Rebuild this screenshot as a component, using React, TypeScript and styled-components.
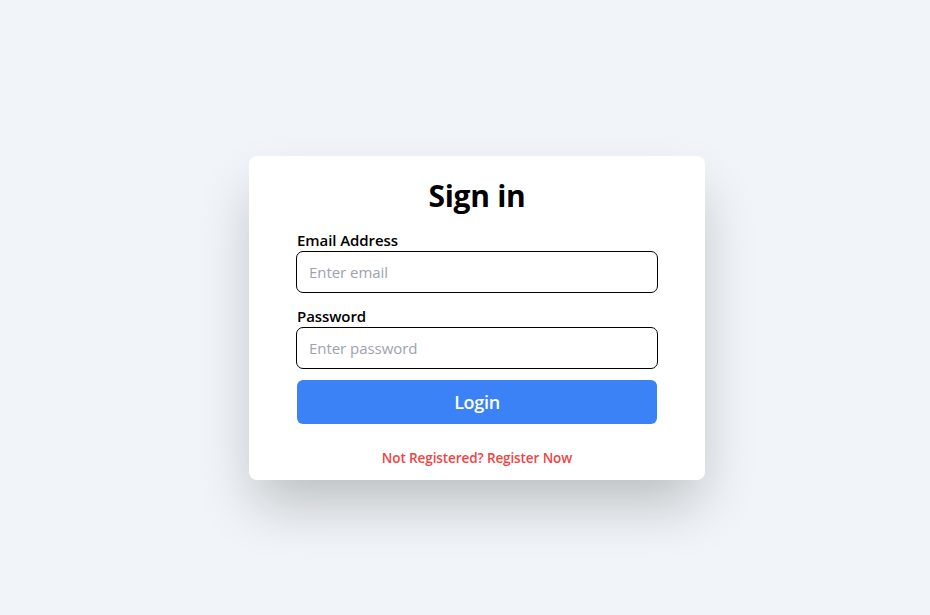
import React from "react";
import styled, { createGlobalStyle } from "styled-components";

const GlobalStyle = createGlobalStyle`
  *, *::before, *::after { box-sizing: border-box; }
  body {
    margin: 0;
    font-family: "Open Sans", "Noto Sans", sans-serif;
    color: #000;
  }
`;

const Page = styled.main`
  display: flex;
  justify-content: center;
  height: 100vh;
  padding: 156px 0 0 24px;
  overflow: hidden;
  background: #f1f5f9;
`;

const Card = styled.form`
  width: 456px;
  height: 324px;
  padding: 20px 48px 0;
  border-radius: 8px;
  background: #fff;
  box-shadow: 0 29px 56px -6px rgba(0, 8, 0, 0.23);
`;

const Title = styled.h1`
  display: flex;
  justify-content: center;
  margin: 0 0 16px;
  font-size: 30px;
  font-weight: 700;
  letter-spacing: -0.3px;
  line-height: 40px;
`;

const Field = styled.div`
  height: 76px;
`;

const Label = styled.label`
  display: block;
  height: 19px;
  font-size: 15px;
  font-weight: 600;
  letter-spacing: -0.08px;
  line-height: 16px;
`;

const Input = styled.input`
  display: block;
  width: 362px;
  height: 42px;
  margin-left: -1px;
  padding: 0 12px;
  border: 1px solid #000;
  border-radius: 7px;
  background: #fff;
  font: 400 15px "Open Sans", sans-serif;
  letter-spacing: -0.05px;
  outline: none;
  &::placeholder { color: #9ca3af; opacity: 1; }
`;

const Button = styled.button`
  display: block;
  width: 360px;
  height: 44px;
  margin-top: -4px;
  padding: 0;
  border: 0;
  border-radius: 6px;
  background: #3b82f6;
  color: #fff;
  font: 600 18px "Open Sans", sans-serif;
  letter-spacing: -0.3px;
`;

const Register = styled.a`
  display: flex;
  justify-content: center;
  margin-top: 24px;
  color: #ef4444;
  font-size: 13.5px;
  font-weight: 600;
  letter-spacing: -0.1px;
  line-height: 20px;
  white-space: nowrap;
`;

export default function App() {
  return (
    <>
      <GlobalStyle />
      <Page>
        <Card>
          <Title>Sign in</Title>
          <Field>
            <Label htmlFor="email">Email Address</Label>
            <Input id="email" type="email" placeholder="Enter email" />
          </Field>
          <Field>
            <Label htmlFor="password">Password</Label>
            <Input id="password" type="password" placeholder="Enter password" />
          </Field>
          <Button type="button">Login</Button>
          <Register>Not Registered? Register Now</Register>
        </Card>
      </Page>
    </>
  );
}
